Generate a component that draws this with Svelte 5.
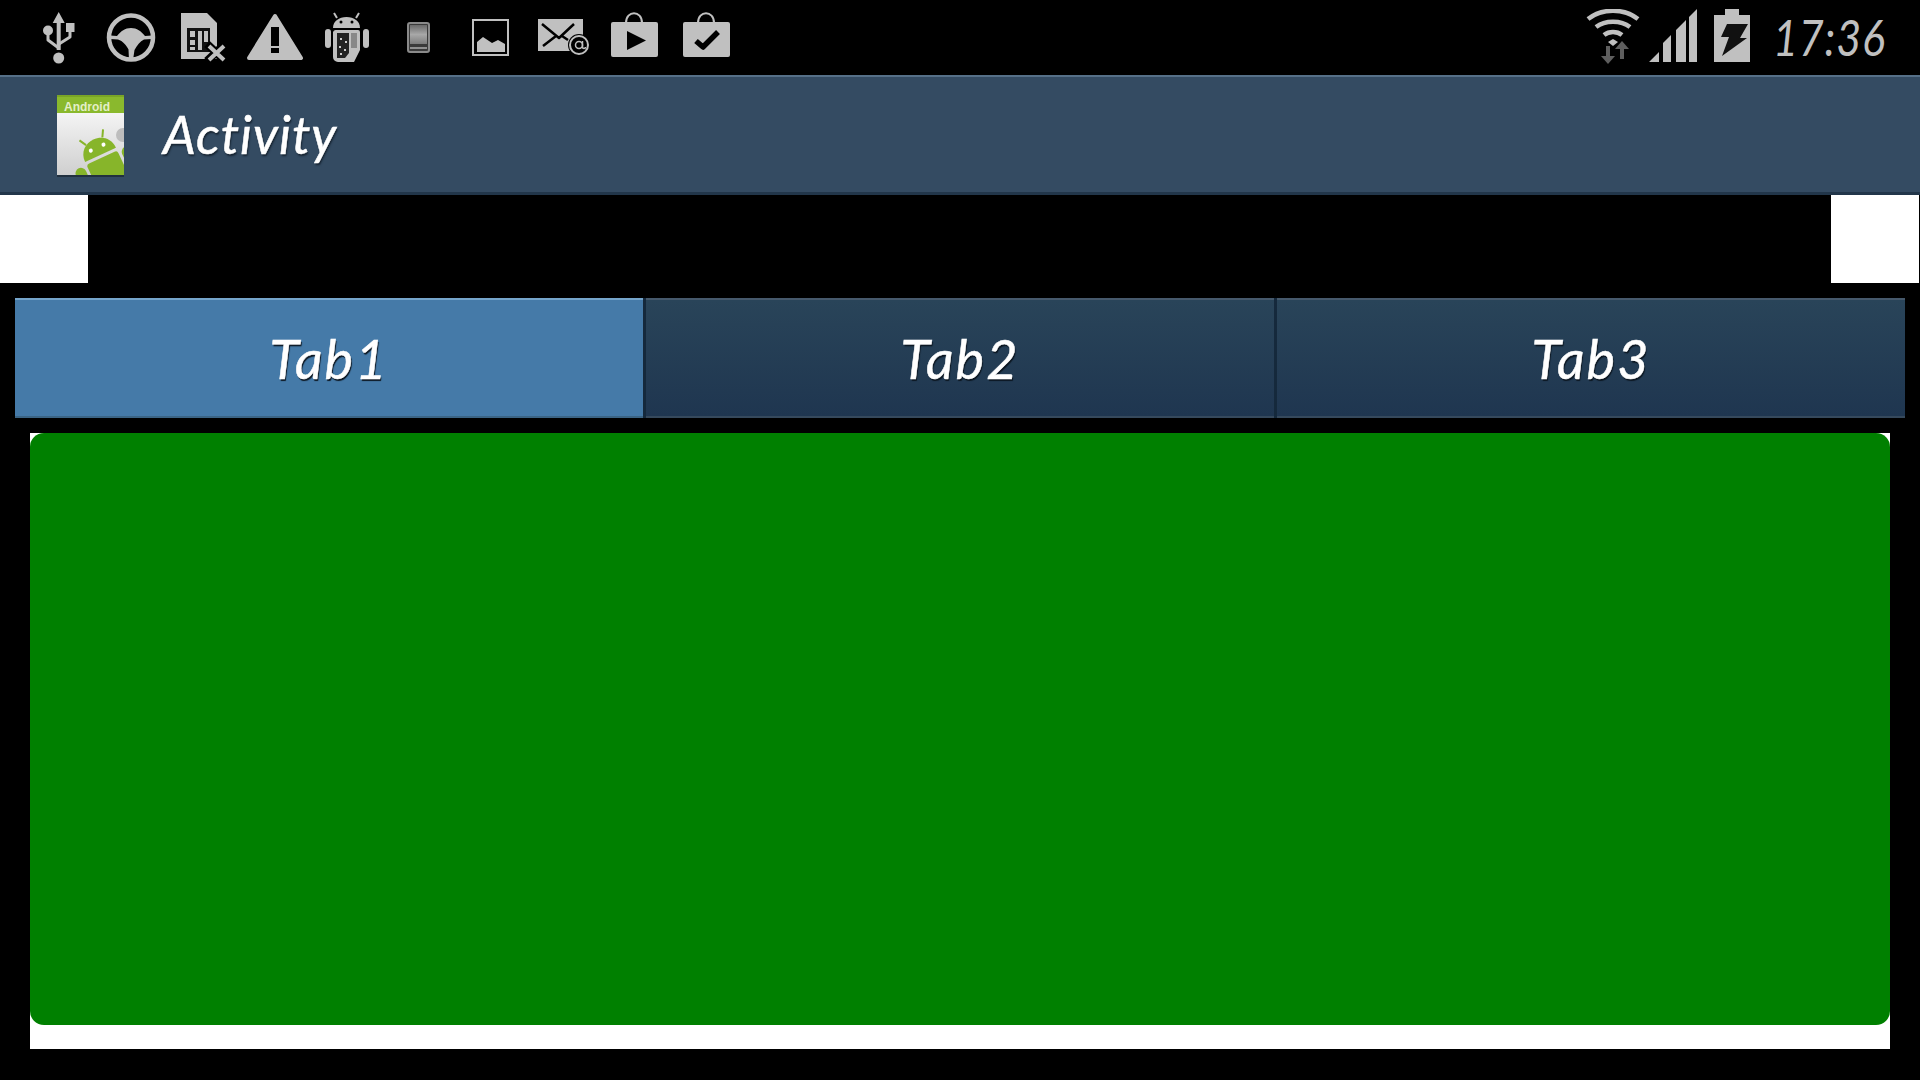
<script>
  const tabs = ["Tab1", "Tab2", "Tab3"];
  let active = 0;
</script>

<div class="screen">
  <div class="status">
    <div class="left-icons">
      <!-- usb -->
      <svg viewBox="0 0 72 75" class="ico">
        <path d="M36.7 12l6 11h-4v27h-4V23h-4z" />
        <circle cx="36.7" cy="58" r="5.5" />
        <circle cx="26" cy="30.5" r="5" />
        <rect x="44" y="23" width="8.5" height="9" />
        <path d="M26 33v7l10.7 8M48 30v7l-11 7" class="line" stroke-width="3" />
      </svg>
      <!-- car mode -->
      <svg viewBox="0 0 72 75" class="ico">
        <circle cx="37" cy="37.5" r="22" class="line" stroke-width="4.500" />
        <path d="M16 35.500l7 .5c4-5 8-8 14-8s10 3 14 8l7-.5v3.500l-8 .5c-4 2-7 6-9.500 10.500L39 60h-4l-.500-10.500C32 45 29 41 24 39.500L16 39z" />
      </svg>
      <!-- sim removed -->
      <svg viewBox="0 0 72 75" class="ico">
        <path d="M15 13h26l10 10v36H15z" />
        <rect x="21" y="28" width="23" height="24" fill="#111" />
        <path d="M24 31h5v6h-5zM24 40h5v5h-5zM24 47h5v3h-5zM32 31h4v19h-4zM38 31h4v11h-4z" />
        <path d="M41 44l18 17M59 44L41 61" class="line" stroke="#000" stroke-width="8" />
        <path d="M43 46l15 14M58 46L43 60" class="line" stroke-width="4" />
      </svg>
      <!-- warning -->
      <svg viewBox="0 0 72 75" class="ico">
        <path d="M37 16L63 58H11z" stroke="#c0c0c0" stroke-width="4" stroke-linejoin="round" />
        <rect x="33" y="27" width="8" height="19" fill="#000" />
        <rect x="33" y="48" width="8" height="5" fill="#000" />
      </svg>
      <!-- android debug sd -->
      <svg viewBox="0 0 72 75" class="ico">
        <path d="M23 28c0-7 6-11 13.500-11S50 21 50 28z" />
        <path d="M27 18l-3-5M46 18l3-5" class="line" stroke-width="2" />
        <circle cx="31" cy="22" r="1.500" fill="#000" />
        <circle cx="42" cy="22" r="1.500" fill="#000" />
        <rect x="15" y="29" width="6" height="19" rx="3" />
        <rect x="53" y="29" width="6" height="19" rx="3" />
        <path d="M26 30h22a2 2 0 012 2v18l-6 12H28a5 5 0 01-5-5V32a3 3 0 013-2z" />
        <path d="M27 33h12v20l-4 5h-8z" fill="#222" />
        <path d="M41 33h6v15h-6z" fill="#888" />
        <path d="M30 38h2v2h-2zM35 41h2v2h-2zM29 46h2v2h-2zM34 49h2v2h-2zM30 53h2v2h-2z" fill="#ccc" />
      </svg>
      <!-- phone -->
      <svg viewBox="0 0 72 75" class="ico">
        <defs>
          <linearGradient id="screen-grad" x1="0" y1="0" x2="0" y2="1">
            <stop offset="0" stop-color="#6a6a6a" />
            <stop offset="0.5" stop-color="#a8a8a8" />
            <stop offset="1" stop-color="#7c7c7c" />
          </linearGradient>
        </defs>
        <rect x="26" y="23" width="21" height="29" rx="2" fill="#3a3a3a" stroke="#8a8a8a" stroke-width="2" />
        <rect x="28" y="25" width="17" height="19" fill="url(#screen-grad)" />
        <rect x="28" y="47" width="17" height="2" fill="#909090" />
      </svg>
      <!-- picture -->
      <svg viewBox="0 0 72 75" class="ico">
        <rect x="19" y="20" width="35" height="35" fill="none" stroke="#c0c0c0" stroke-width="2" />
        <path d="M23 52V42l6-5 6 4 3 2 6-3 7 4v8z" />
      </svg>
      <!-- mail -->
      <svg viewBox="0 0 72 75" class="ico">
        <rect x="12" y="19" width="45" height="32" />
        <path d="M16 24l17 14 15-14M17 46l13-10M36 36l6 4" class="line" stroke="#000" stroke-width="2.500" />
        <circle cx="53" cy="45" r="11" fill="#000" />
        <circle cx="53" cy="45" r="9" class="line" stroke-width="2" />
        <circle cx="53" cy="45" r="3.500" class="line" stroke-width="1.500" />
        <path d="M56.500 41v6c0 2 3 2 3 0" class="line" stroke-width="1.500" />
      </svg>
      <!-- play bag -->
      <svg viewBox="0 0 72 75" class="ico">
        <path d="M28 23c0-13 16-13 16 0" class="line" stroke-width="2" />
        <rect x="13" y="22" width="47" height="35" rx="2" />
        <path d="M29 31l19 9.500L29 50z" fill="#000" />
      </svg>
      <!-- check bag -->
      <svg viewBox="0 0 72 75" class="ico">
        <path d="M28 23c0-13 16-13 16 0" class="line" stroke-width="2" />
        <rect x="13" y="22" width="47" height="35" rx="2" />
        <path d="M26 41l7 6 15-15" class="line" stroke="#000" stroke-width="5.500" />
      </svg>
    </div>

    <div class="right-icons">
      <!-- wifi -->
      <svg width="56" height="60" viewBox="0 0 56 60" class="ico wifi">
        <path d="M3 10c14-11 36-11 50 0M11 18c9-7 25-7 34 0M19 26c5-4 13-4 18 0" class="line" stroke-width="4.500" />
        <path d="M23 33l5-3 5 3-5 4z" />
        <path d="M21 37h4v10h5l-7 8-7-8h5z" fill="#5e5e5e" />
        <path d="M37 32l7 8h-5v10h-4V40h-5z" fill="#5e5e5e" />
      </svg>
      <!-- signal -->
      <svg width="50" height="60" viewBox="0 0 50 60" class="ico signal">
        <path d="M1 54l10-10v10zM15 54V35l8-8v27zM28 54V22l10-10v42zM41 54V9l8-8v53z" />
      </svg>
      <!-- battery -->
      <svg width="38" height="60" viewBox="0 0 38 60" class="ico battery">
        <path d="M12 1h14v6h11v47H1V7h11z" />
        <path d="M14 16h21l-8 14h7L9 48l7-19H8z" fill="#111" />
      </svg>
      <span class="clock">17:36</span>
    </div>
  </div>

  <header class="bar">
    <svg class="app-icon" width="72" height="88" viewBox="0 0 72 88">
      <defs>
        <linearGradient id="page-grad" x1="0" y1="0" x2="0" y2="1">
          <stop offset="0" stop-color="#ffffff" />
          <stop offset="1" stop-color="#cfcfcf" />
        </linearGradient>
        <clipPath id="page-clip">
          <rect x="3" y="2" width="67" height="80" />
        </clipPath>
      </defs>
      <rect x="3" y="4" width="67" height="80" fill="#000" opacity="0.35" />
      <g clip-path="url(#page-clip)">
        <rect x="3" y="2" width="67" height="80" fill="url(#page-grad)" />
        <rect x="3" y="2" width="67" height="18" fill="#8ab92d" />
        <rect x="3" y="2" width="67" height="2" fill="#7aa526" />
        <text x="10" y="18" class="android">Android</text>
        <g transform="translate(9 5) rotate(-25 44 66)">
          <path d="M25 55c0-11 8-17 17-17s17 6 17 17z" fill="#87b52a" />
          <rect x="25" y="58" width="34" height="30" rx="3" fill="#87b52a" />
          <rect x="11" y="58" width="11" height="26" rx="5.500" fill="#87b52a" />
          <rect x="62" y="58" width="11" height="30" rx="5.500" fill="#87b52a" />
          <path d="M33 40l-4-7M51 40l4-7" stroke="#87b52a" stroke-width="2" />
          <circle cx="35" cy="47" r="2" fill="#fff" />
          <circle cx="49" cy="47" r="2" fill="#fff" />
        </g>
        <circle cx="69" cy="42" r="7" fill="#bdbdbd" />
      </g>
    </svg>
    <h1 class="title">Activity</h1>
  </header>

  <div class="strip">
    <div class="block"></div>
    <div class="block"></div>
  </div>

  <div class="tabs">
    {#each tabs as tab, i}
      <div class="tab" class:active={i === active}>{tab}</div>
    {/each}
  </div>

  <main class="content">
    <div class="panel"></div>
  </main>
</div>

<style>
  :global(body) {
    background: #000;
  }

  .screen {
    width: 1920px;
    height: 1080px;
    background: #000;
    overflow: hidden;
    font-family: Lato, "Open Sans", sans-serif;
    font-style: italic;
  }

  .status {
    height: 75px;
    display: flex;
    justify-content: space-between;
    background: #000;
  }

  .left-icons {
    display: flex;
    padding-left: 22px;
  }

  .left-icons svg {
    width: 72px;
    height: 75px;
  }

  .ico {
    fill: #c0c0c0;
    display: block;
  }

  .line {
    fill: none;
    stroke-linejoin: round;
  }

  .ico .line:not([stroke]) {
    stroke: #c0c0c0;
  }

  .right-icons {
    display: flex;
    padding-right: 39px;
    align-items: flex-start;
  }

  .wifi {
    margin-top: 9px;
  }

  .signal {
    margin: 8px 0 0 7px;
  }

  .battery {
    margin: 8px 0 0 15px;
  }

  .clock {
    margin-left: 22px;
    width: 108px;
    margin-top: 7px;
    color: #c0c0c0;
    font-size: 50px;
    font-weight: 400;
    line-height: 60px;
    letter-spacing: 1px;
    white-space: nowrap;
    transform: scaleX(0.86);
    transform-origin: left center;
  }

  .bar {
    box-sizing: border-box;
    height: 120px;
    display: flex;
    align-items: center;
    padding-left: 54px;
    background: #344b62;
    border-top: 2px solid #567088;
    border-bottom: 3px solid #22364a;
  }

  .app-icon {
    display: block;
    margin-top: 4px;
  }

  .title {
    margin: 0 0 2px 37px;
    color: #fff;
    font-size: 52px;
    font-weight: 400;
    line-height: 60px;
    letter-spacing: 1px;
    -webkit-text-stroke: 0.5px #fff;
    text-shadow: 1px 2px 2px #15222f;
  }

  .android {
    font-family: "Liberation Sans", sans-serif;
    font-style: normal;
    font-size: 12px;
    font-weight: 700;
    fill: #e4efc8;
  }

  .strip {
    height: 88px;
    display: flex;
    justify-content: space-between;
    padding-right: 1px;
  }

  .block {
    width: 88px;
    background: #fff;
  }

  .tabs {
    height: 120px;
    margin: 15px 15px 0;
    display: flex;
    gap: 3px;
    background: #15293c;
  }

  .tab {
    box-sizing: border-box;
    flex: 1;
    display: flex;
    align-items: center;
    justify-content: center;
    color: #fff;
    font-size: 54px;
    letter-spacing: 2px;
    -webkit-text-stroke: 0.5px #fff;
    text-shadow: 1px 2px 1px #0c1722;
    background: linear-gradient(#294459, #1f3650);
    border-top: 2px solid #46596c;
    border-bottom: 2px solid #36495c;
  }

  .tab.active {
    background: #457aa8;
    border-top-color: #75a5cb;
    border-bottom-color: #3b6484;
  }

  .content {
    height: 616px;
    margin: 15px 30px 0;
    background: #fff;
  }

  .panel {
    height: 592px;
    background: #008000;
    border-radius: 14px;
  }
</style>
